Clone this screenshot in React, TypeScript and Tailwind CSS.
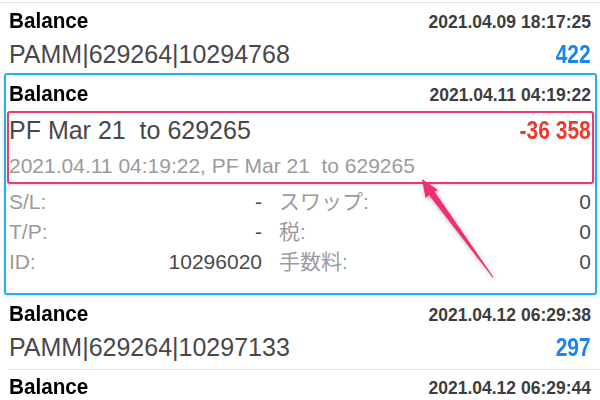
const sans = "font-['Liberation_Sans','Noto_Sans_CJK_JP',sans-serif]";

function Header({ date }: { date: string }) {
  return (
    <div className="flex items-baseline justify-between leading-[32px]">
      <span className="inline-block origin-left scale-x-[0.94] text-[22px] font-bold text-black">Balance</span>
      <span className="text-[17.5px] font-bold text-[#3d3d40]">{date}</span>
    </div>
  );
}

function Amount({ comment, value, tone }: { comment: string; value: string; tone: 'blue' | 'red' }) {
  return (
    <div className="flex items-baseline justify-between leading-[32px]">
      <span className="whitespace-pre text-[25px] text-[#48484a]">{comment}</span>
      <span
        className={`inline-block origin-right scale-x-[0.84] text-[25px] font-bold ${
          tone === 'blue' ? 'text-[#1a84f2]' : 'text-[#ee3a2c]'
        }`}
      >
        {value}
      </span>
    </div>
  );
}

function Detail({ label, value }: { label: string; value: string }) {
  return (
    <div className="flex items-baseline justify-between">
      <span className="text-[#9b9b9b]">{label}</span>
      <span className="text-[#4a4a4c]">{value}</span>
    </div>
  );
}

export default function App() {
  return (
    <div className={`${sans} relative h-[400px] w-[600px] overflow-hidden bg-white`}>
      {/* Row 1 */}
      <div className="pt-[2px]">
        <div className="h-px bg-[#e3e3e6]" />
        <div className="px-[9px] pt-[2px]">
          <Header date="2021.04.09 18:17:25" />
          <Amount comment="PAMM|629264|10294768" value="422" tone="blue" />
        </div>
      </div>

      {/* Selected row */}
      <div className="mt-[3px] ml-[4px] mr-[3px] rounded-[3px] border-2 border-[#22b1ea] pb-[16px] shadow-[0_1px_3px_rgba(0,0,0,0.18)]">
        <div className="pl-[3px] pr-[4px] pt-[3px]">
          <Header date="2021.04.11 04:19:22" />
        </div>
        <div className="mx-px rounded-[3px] border-2 border-[#ea3a6e] pt-px pb-[2px] pr-px shadow-[0_1px_2px_rgba(0,0,0,0.15)]">
          <Amount comment="PF Mar 21  to 629265" value="-36 358" tone="red" />
          <div className="mt-[6px] whitespace-pre text-[21px] leading-[28px] text-[#9b9b9b]">
            2021.04.11 04:19:22, PF Mar 21  to 629265
          </div>
        </div>
        <div className="mt-[3px] flex pl-[3px] pr-[4px] text-[21px] leading-[30px]">
          <div className="flex w-[253px] flex-col">
            <Detail label="S/L:" value="-" />
            <Detail label="T/P:" value="-" />
            <Detail label="ID:" value="10296020" />
          </div>
          <div className="ml-[17px] flex flex-1 flex-col">
            <Detail label="スワップ:" value="0" />
            <Detail label="税:" value="0" />
            <Detail label="手数料:" value="0" />
          </div>
        </div>
      </div>

      {/* Row 3 */}
      <div className="px-[9px] pt-[3px] pb-[6px]">
        <Header date="2021.04.12 06:29:38" />
        <Amount comment="PAMM|629264|10297133" value="297" tone="blue" />
      </div>
      <div className="ml-[9px] h-px bg-[#e3e3e6]" />
      <div className="px-[9px] pt-px">
        <Header date="2021.04.12 06:29:44" />
      </div>

      {/* Annotation arrow */}
      <svg
        className="pointer-events-none absolute left-0 top-0 drop-shadow-[1px_2px_2px_rgba(0,0,0,0.3)]"
        width="600"
        height="400"
        viewBox="0 0 600 400"
      >
        <polygon
          points="422,179 438,190 434.5,191.5 493.4,277 492.6,277.4 429,195 425.5,198"
          fill="#f0306c"
        />
      </svg>
    </div>
  );
}
